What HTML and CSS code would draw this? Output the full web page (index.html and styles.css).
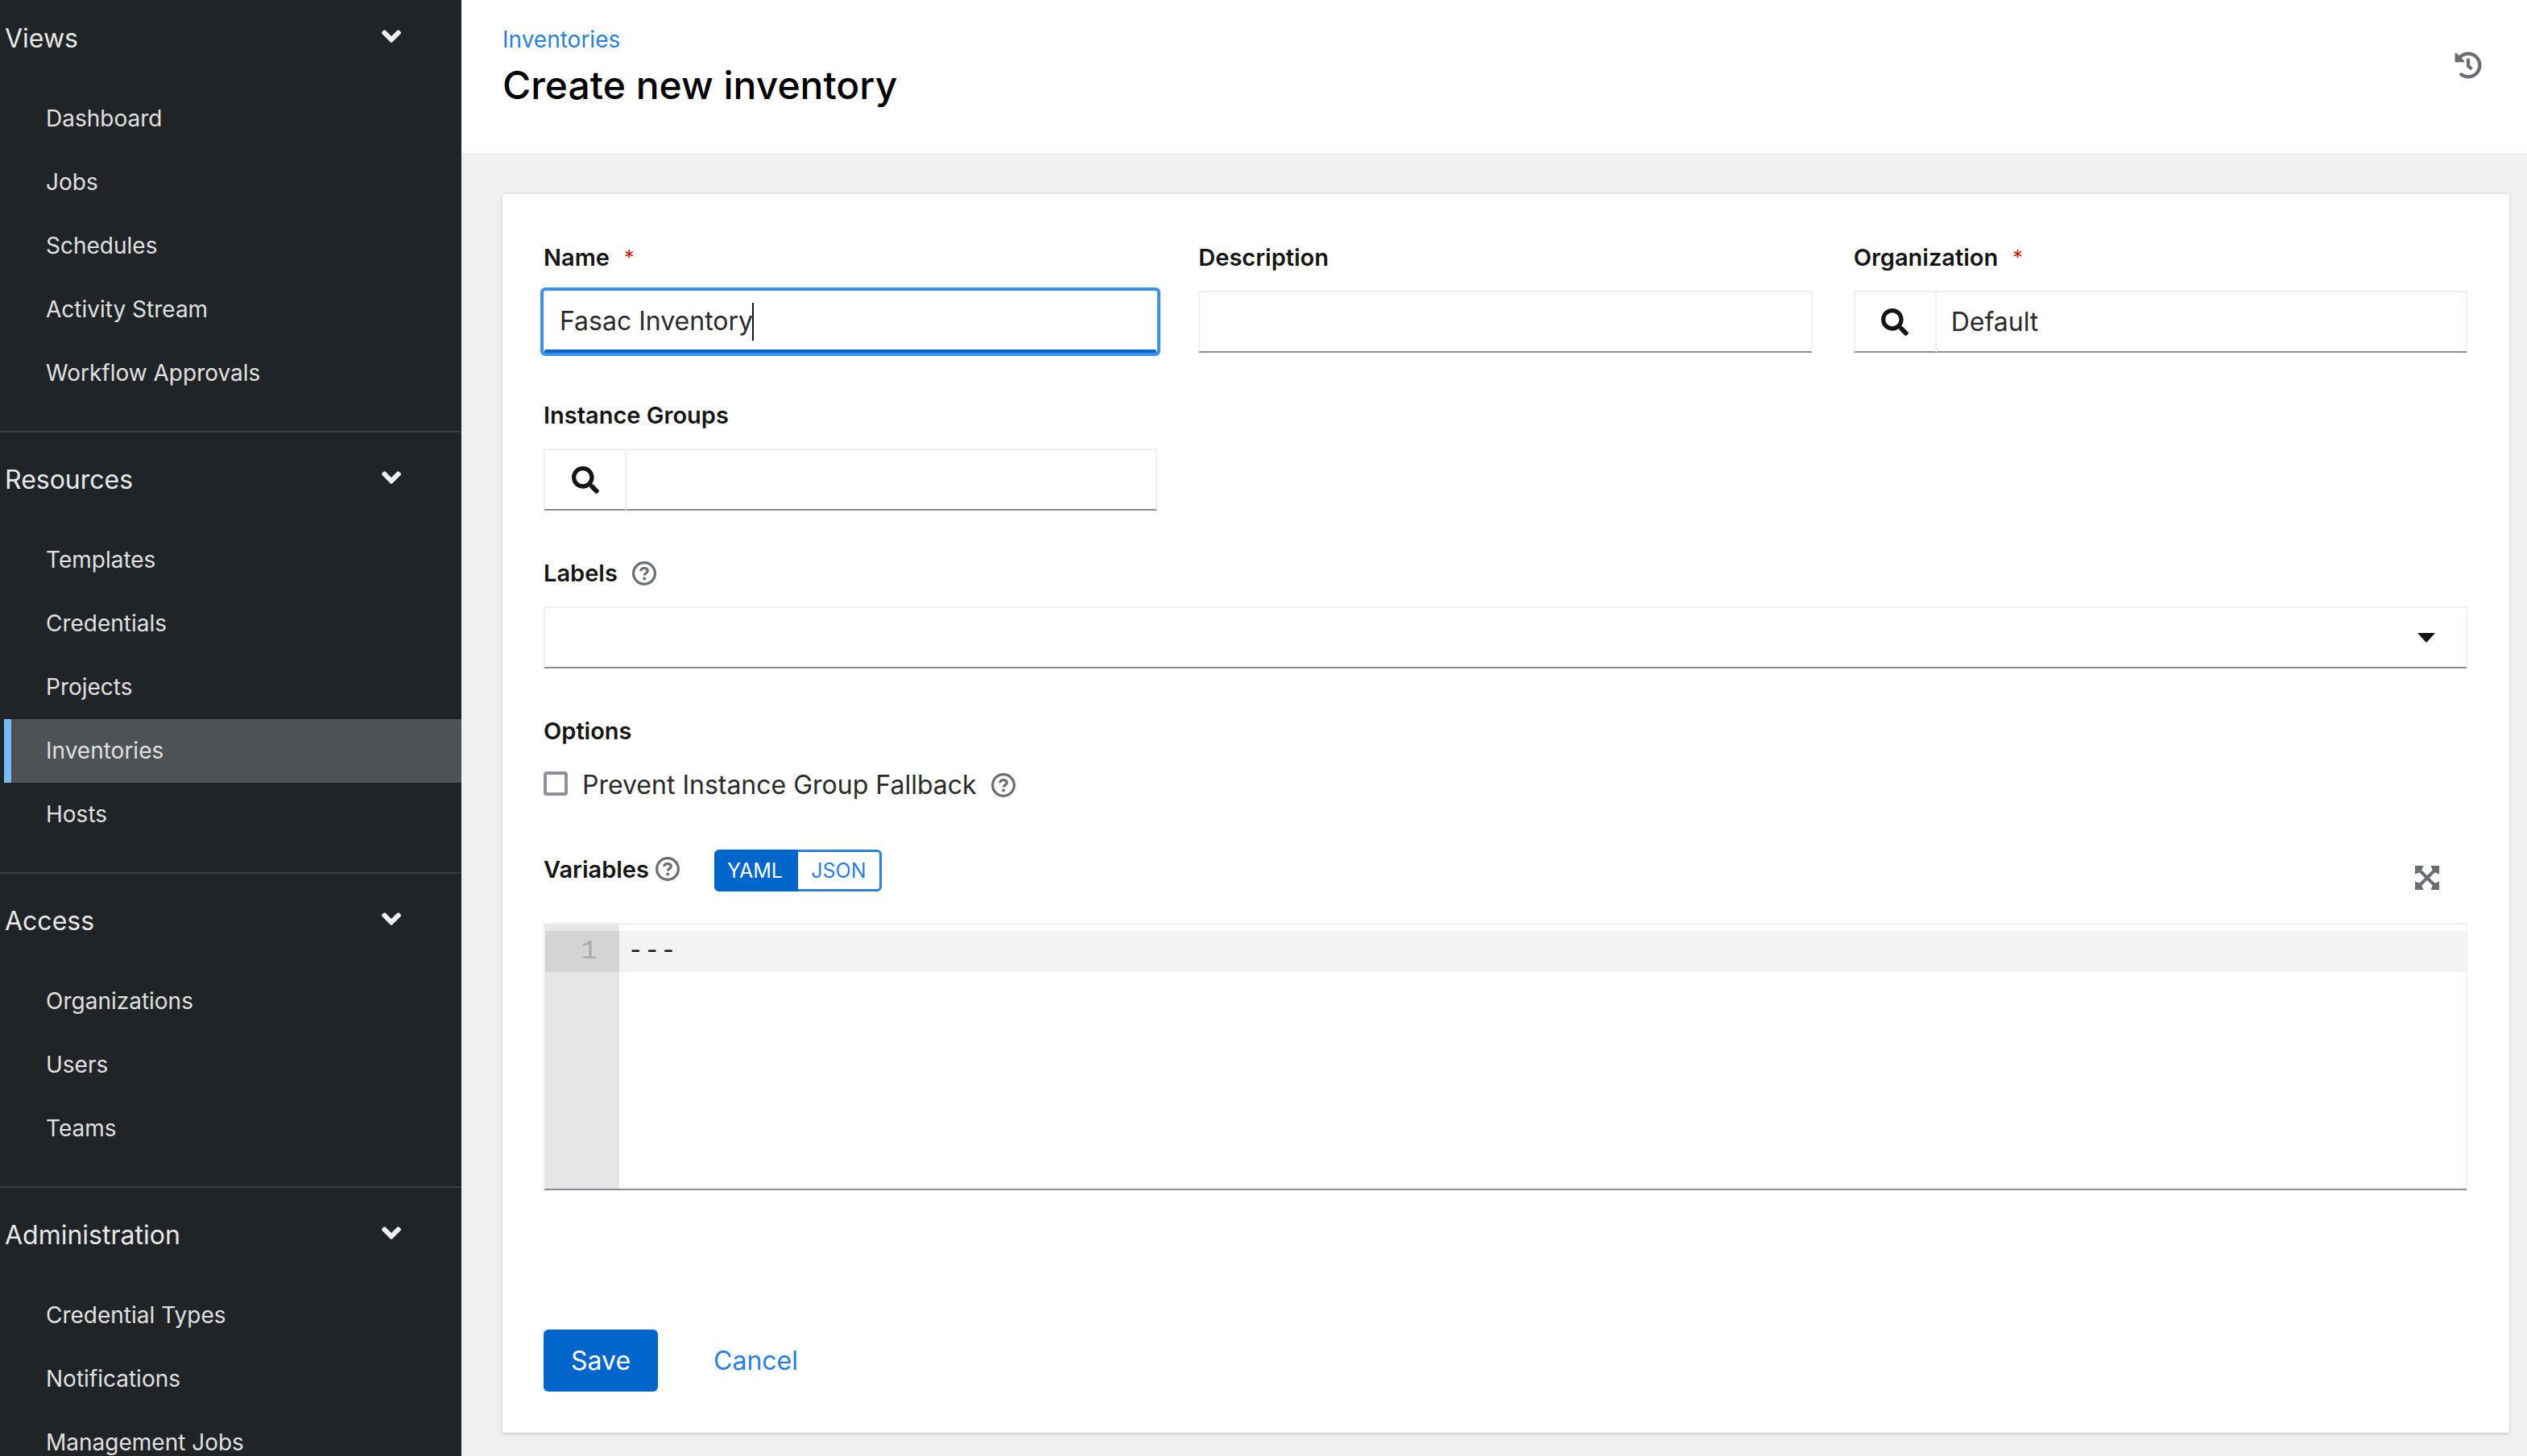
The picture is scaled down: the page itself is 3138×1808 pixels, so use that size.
FILE: index.html
```html
<!DOCTYPE html>
<html lang="en">
<head>
<meta charset="utf-8">
<title>Create new inventory</title>
<link rel="stylesheet" href="styles.css">
</head>
<body>
<svg class="sprite" aria-hidden="true">
  <symbol id="angle-down" viewBox="0 150 320 212"><path d="M143 352.3L7 216.3c-9.4-9.4-9.4-24.6 0-33.9l22.6-22.6c9.4-9.4 24.6-9.4 33.9 0l96.4 96.4 96.4-96.4c9.4-9.4 24.6-9.4 33.9 0l22.6 22.6c9.4 9.4 9.4 24.6 0 33.9l-136 136c-9.2 9.4-24.4 9.4-33.8 0z"/></symbol>
  <symbol id="search" viewBox="0 0 512 512"><path d="M505 442.7L405.3 343c-4.5-4.5-10.6-7-17-7H372c27.6-35.3 44-79.7 44-128C416 93.1 322.9 0 208 0S0 93.1 0 208s93.1 208 208 208c48.3 0 92.7-16.4 128-44v16.3c0 6.4 2.5 12.5 7 17l99.7 99.7c9.4 9.4 24.6 9.4 33.9 0l28.3-28.3c9.4-9.4 9.4-24.6.1-34zM208 336c-70.7 0-128-57.2-128-128 0-70.7 57.2-128 128-128 70.7 0 128 57.2 128 128 0 70.7-57.2 128-128 128z"/></symbol>
  <symbol id="history" viewBox="0 0 512 512"><path d="M504 255.531c.253 136.64-111.18 248.372-247.82 248.468-59.015.042-113.223-20.53-155.822-54.911-11.077-8.94-11.905-25.541-1.839-35.607l11.267-11.267c8.609-8.609 22.353-9.551 31.891-1.984C173.062 425.135 212.781 440 256 440c101.705 0 184-82.311 184-184 0-101.705-82.311-184-184-184-48.814 0-93.149 18.969-126.068 49.932l50.754 50.754c10.08 10.08 2.941 27.314-11.313 27.314H24c-8.837 0-16-7.163-16-16V38.627c0-14.254 17.234-21.393 27.314-11.314l49.372 49.372C129.209 34.136 189.552 8 256 8c136.81 0 247.747 110.78 248 247.531zm-180.912 78.784l9.823-12.63c8.138-10.463 6.253-25.542-4.21-33.679L288 256.349V152c0-13.255-10.745-24-24-24h-16c-13.255 0-24 10.745-24 24v135.651l65.409 50.874c10.463 8.137 25.541 6.253 33.679-4.21z"/></symbol>
  <symbol id="help" viewBox="0 0 30 30"><circle cx="15" cy="15" r="13.4" fill="none" stroke="currentColor" stroke-width="3.2"/><path d="M10.6 12.1c.4-2.4 2.100-3.600 4.400-3.600 2.500 0 4.300 1.300 4.300 3.300 0 2.900-4 2.700-4 5.600" fill="none" stroke="currentColor" stroke-width="3.2"/><circle cx="15.200" cy="21.500" r="2"/></symbol>
  <symbol id="expand" viewBox="0 0 30 30"><path d="M0 0H10.500L8.500 5 5 8.500 0 10.500zM30 0V10.500L25 8.500 21.500 5 19.500 0zM0 30V19.500L5 21.500 8.500 25 10.500 30zM30 30H19.500L21.500 25 25 21.500 30 19.500z"/><path d="M4 4L26 26M26 4L4 26" stroke="currentColor" stroke-width="4"/></symbol>
</svg>
<div class="page">
  <nav class="sidebar" aria-label="Global navigation">
    <section class="nav-section">
      <button class="nav-title" type="button">Views<svg class="chevron"><use href="#angle-down"/></svg></button>
      <ul class="nav-list">
        <li><a href="#dashboard">Dashboard</a></li>
        <li><a href="#jobs">Jobs</a></li>
        <li><a href="#schedules">Schedules</a></li>
        <li><a href="#activity">Activity Stream</a></li>
        <li><a href="#approvals">Workflow Approvals</a></li>
      </ul>
    </section>
    <section class="nav-section">
      <button class="nav-title" type="button">Resources<svg class="chevron"><use href="#angle-down"/></svg></button>
      <ul class="nav-list">
        <li><a href="#templates">Templates</a></li>
        <li><a href="#credentials">Credentials</a></li>
        <li><a href="#projects">Projects</a></li>
        <li><a href="#inventories" class="current" aria-current="page">Inventories</a></li>
        <li><a href="#hosts">Hosts</a></li>
      </ul>
    </section>
    <section class="nav-section">
      <button class="nav-title" type="button">Access<svg class="chevron"><use href="#angle-down"/></svg></button>
      <ul class="nav-list">
        <li><a href="#organizations">Organizations</a></li>
        <li><a href="#users">Users</a></li>
        <li><a href="#teams">Teams</a></li>
      </ul>
    </section>
    <section class="nav-section">
      <button class="nav-title" type="button">Administration<svg class="chevron"><use href="#angle-down"/></svg></button>
      <ul class="nav-list">
        <li><a href="#credential-types">Credential Types</a></li>
        <li><a href="#notifications">Notifications</a></li>
        <li><a href="#management-jobs">Management Jobs</a></li>
      </ul>
    </section>
  </nav>
  <main class="main">
    <header class="page-header">
      <div>
        <a class="breadcrumb" href="#inventories">Inventories</a>
        <h1 class="page-title">Create new inventory</h1>
      </div>
      <button class="icon-button history" type="button" aria-label="Activity history"><svg class="icon-large"><use href="#history"/></svg></button>
    </header>
    <form class="card">
      <div class="grid">
        <div class="field">
          <div class="label-row"><label for="name">Name</label><span class="required">*</span></div>
          <div class="focus-wrap"><input class="control focused" id="name" type="text" value="Fasac Inventory"><span class="caret"></span></div>
        </div>
        <div class="field">
          <div class="label-row"><label for="description">Description</label></div>
          <input class="control" id="description" type="text">
        </div>
        <div class="field">
          <div class="label-row"><label for="organization">Organization</label><span class="required">*</span></div>
          <div class="input-group"><button class="search-button" type="button" aria-label="Search organizations"><svg class="icon-large"><use href="#search"/></svg></button><input class="control joined" id="organization" type="text" value="Default"></div>
        </div>
        <div class="field">
          <div class="label-row"><label for="groups">Instance Groups</label></div>
          <div class="input-group"><button class="search-button" type="button" aria-label="Search instance groups"><svg class="icon-large"><use href="#search"/></svg></button><input class="control joined" id="groups" type="text"></div>
        </div>
      </div>
      <div class="field">
        <div class="label-row"><label for="labels">Labels</label><button class="icon-button" type="button" aria-label="Help for labels"><svg class="icon"><use href="#help"/></svg></button></div>
        <div class="select-wrap"><select class="control" id="labels"><option></option></select><span class="arrow"></span></div>
      </div>
      <fieldset class="field options">
        <legend class="label-row">Options</legend>
        <div class="check-row"><input class="checkbox" id="fallback" type="checkbox"><label for="fallback">Prevent Instance Group Fallback</label><button class="icon-button" type="button" aria-label="Help for fallback"><svg class="icon"><use href="#help"/></svg></button></div>
      </fieldset>
      <div class="field variables">
        <div class="variables-bar">
          <label for="variables">Variables</label>
          <button class="icon-button" type="button" aria-label="Help for variables"><svg class="icon"><use href="#help"/></svg></button>
          <div class="toggle"><button class="toggle-item on" type="button">YAML</button><button class="toggle-item" type="button">JSON</button></div>
          <button class="icon-button expand" type="button" aria-label="Expand editor"><svg class="icon"><use href="#expand"/></svg></button>
        </div>
        <div class="editor">
          <div class="gutter"><div class="line-number">1</div></div>
          <textarea class="code" id="variables" spellcheck="false">---</textarea>
        </div>
      </div>
      <div class="actions"><button class="button primary" type="submit">Save</button><button class="button link" type="button">Cancel</button></div>
    </form>
  </main>
</div>
</body>
</html>
```
FILE: styles.css
```css
* { box-sizing: border-box; }

body {
  margin: 0;
  background: #f0f0f0;
  color: #151515;
  font-family: Inter, "Open Sans", sans-serif;
  font-size: 32px;
}

button, input, select, textarea { font: inherit; color: inherit; margin: 0; }
button { cursor: pointer; }
svg { display: block; fill: currentColor; }
.sprite { position: absolute; width: 0; height: 0; }

.page { display: flex; height: 100vh; overflow: hidden; }

/* Sidebar */
.sidebar {
  flex: none;
  width: 573px;
  overflow: hidden;
  background: #212427;
  color: #e8e8e8;
}
.nav-section { padding: 18px 0 32px; }
.nav-section:first-child { padding-top: 7px; }
.nav-section + .nav-section { border-top: 2px solid #3c3f42; }
.nav-title {
  display: flex;
  justify-content: space-between;
  align-items: center;
  width: 100%;
  height: 81px;
  padding: 0 75px 0 6px;
  border: 0;
  background: none;
}
.chevron { width: 24px; height: 16px; margin-bottom: 6px; color: #f0f0f0; }
.nav-list { margin: 20px 0 0; padding: 0 0 0 5px; list-style: none; }
.nav-list a {
  display: block;
  padding-left: 52px;
  color: #e0e0e0;
  font-size: 28px;
  line-height: 79px;
  text-decoration: none;
}
.nav-list .current {
  padding-left: 43px;
  border-left: 9px solid #73bcf7;
  background: #4f5255;
}

/* Page header */
.main { flex: 1; min-width: 0; }
.page-header {
  display: flex;
  justify-content: space-between;
  align-items: flex-start;
  padding: 26px 56px 50px 51px;
  background: #fff;
}
.breadcrumb {
  display: block;
  color: #2b80dd;
  font-size: 28px;
  line-height: 46px;
  text-decoration: none;
}
.page-title { margin: 0; font-size: 48px; font-weight: 500; line-height: 68px; color: #000; }
.icon-button { display: block; padding: 0; border: 0; background: none; color: #6a6e73; }
.history { margin-top: 38px; }
.icon { width: 30px; height: 30px; }
.icon-large { width: 34px; height: 34px; }

/* Form card */
.card {
  display: flex;
  flex-direction: column;
  gap: 51px;
  margin: 51px 22px 29px 51px;
  padding: 52px 52px 51px 51px;
  background: #fff;
  box-shadow: 0 2px 4px rgba(3, 3, 3, .12), 0 0 4px rgba(3, 3, 3, .06);
}
.grid { display: grid; grid-template-columns: repeat(3, 1fr); gap: 51px; }
.field { min-width: 0; }
.label-row, .variables-bar {
  font-size: 29px;
  font-weight: 600;
}
.label-row {
  display: flex;
  align-items: center;
  gap: 18px;
  padding: 0;
  margin-bottom: 14px;
  line-height: 54px;
}
.required { color: #c9190b; font-size: 25px; font-weight: 400; }
.control {
  display: block;
  width: 100%;
  height: 77px;
  padding: 0 18px;
  border: 2px solid #f0f0f0;
  border-bottom-color: #8a8d90;
  border-radius: 0;
  outline: 0;
  background: #fff;
  color: #2b2b2b;
  appearance: none;
}
.control.focused {
  border-color: #fff;
  border-bottom: 4px solid #06c;
  outline: 4px solid #3c8fec;
  border-radius: 2px;
}
.focus-wrap, .select-wrap { position: relative; }
.caret { position: absolute; left: 259px; top: 15px; width: 2px; height: 47px; background: #151515; }
.input-group { display: flex; }
.joined { flex: 1; border-left: 0; min-width: 0; }
.search-button {
  display: grid;
  place-items: center;
  flex: none;
  width: 103px;
  padding: 0;
  border: 2px solid #f0f0f0;
  border-bottom-color: #8a8d90;
  background: #fff;
}
.arrow {
  position: absolute;
  right: 40px;
  top: 33px;
  border: 11px solid transparent;
  border-top: 12px solid #151515;
  border-bottom: 0;
  pointer-events: none;
}

.options { margin: 0; padding: 0; border: 0; }
.check-row { display: flex; align-items: center; gap: 18px; line-height: 52px; color: #2b2b2b; }
.checkbox {
  width: 30px;
  height: 30px;
  margin: 0 0 4px;
  border: 4px solid #8f8f9d;
  border-radius: 4px;
  background: #fff;
  appearance: none;
}

/* Variables editor */
.variables-bar {
  display: flex;
  align-items: center;
  gap: 8px;
  height: 54px;
  margin-bottom: 40px;
}
.toggle { display: flex; margin: 4px 0 0 35px; }
.toggle-item {
  width: 104px;
  height: 52px;
  padding: 0;
  border: 3px solid #2b80dd;
  border-left-width: 0;
  border-radius: 0 6px 6px 0;
  background: #fff;
  color: #2b80dd;
  font-size: 25px;
  font-weight: 400;
}
.toggle-item.on {
  border-color: #06c;
  border-radius: 6px 0 0 6px;
  background: #06c;
  color: #fff;
}
.expand { margin: 22px 35px 0 auto; }
.editor {
  display: flex;
  height: 332px;
  border: 2px solid #f0f0f0;
  border-bottom-color: #8a8d90;
  font-family: "Liberation Mono", monospace;
  font-size: 34px;
  line-height: 51px;
}
.gutter { flex: none; width: 92px; padding-top: 8px; background: #e6e6e6; }
.line-number { padding-right: 27px; background: #d4d4d4; color: #aaa; text-align: right; }
.code {
  flex: 1;
  padding: 8px 10px 0;
  border: 0;
  outline: 0;
  resize: none;
  background: linear-gradient(#f3f3f3, #f3f3f3) 0 8px / 100% 51px no-repeat;
}

.actions { display: flex; gap: 35px; margin-top: 122px; }
.button { height: 77px; padding: 0 34px; border: 0; border-radius: 6px; }
.primary { background: #06c; color: #fff; }
.link { background: none; color: #2b80dd; }
```
